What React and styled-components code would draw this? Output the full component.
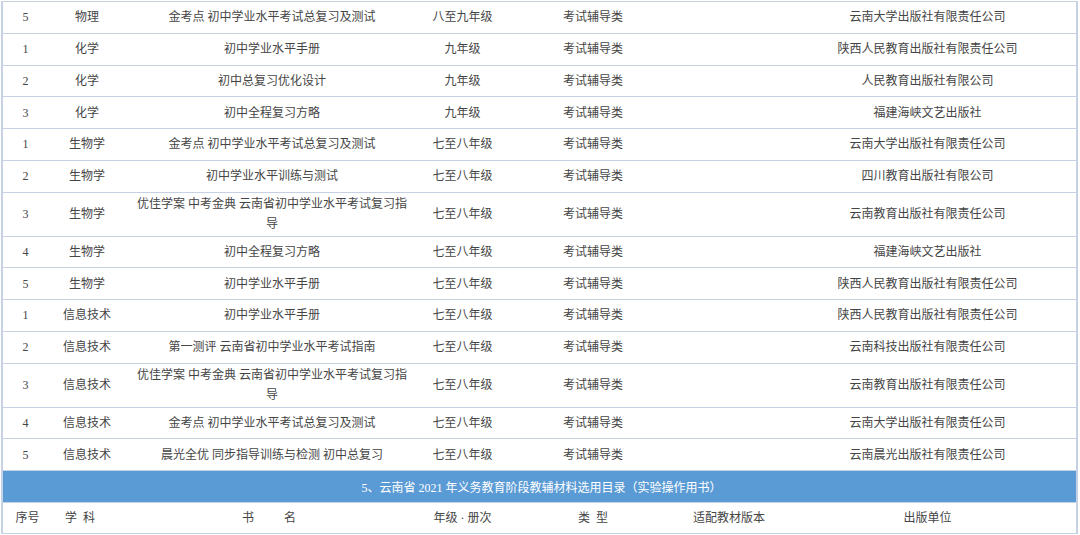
import React from "react";
import styled, { createGlobalStyle } from "styled-components";

const GlobalStyle = createGlobalStyle`
  html, body {
    margin: 0;
    padding: 0;
    background: #ffffff;
  }
  body {
    font-family: "Liberation Serif", "Noto Sans CJK SC", serif;
    color: #454545;
  }
`;

const Table = styled.div`
  width: 1073px;
  margin: 1px 0 0 1px;
  border-left: 2px solid #c6d2e3;
  border-right: 2px solid #c6d2e3;
  border-top: 1.5px solid #c6d2e3;
`;

const cols = "45px 78px 292px 89px 172px 100px 1fr";

const Row = styled.div`
  display: grid;
  grid-template-columns: ${cols};
  height: ${(p) => (p.$tall ? "44px" : "31.75px")};
  box-sizing: border-box;
  border-bottom: 1.5px solid #c6d2e3;
  font-size: 12px;
`;

const Cell = styled.div`
  display: flex;
  align-items: center;
  justify-content: center;
  text-align: center;
  line-height: 20px;
  padding: 0 ${(p) => p.$pad || 0}px;
  white-space: ${(p) => (p.$wrap ? "normal" : "pre")};
`;

const HeadCell = styled(Cell)`
  transform: translateX(${(p) => p.$shift || 0}px);
`;

const Banner = styled.div`
  height: 32px;
  box-sizing: border-box;
  background: #5b9bd5;
  color: #ffffff;
  font-size: 12px;
  display: flex;
  align-items: center;
  justify-content: center;
  border-bottom: 1.5px solid #c6d2e3;
  padding-left: 4px;
`;

const HeadRow = styled(Row)`
  height: 31px;
`;

const rows = [
  ["5", "物理", "金考点 初中学业水平考试总复习及测试", "八至九年级", "云南大学出版社有限责任公司"],
  ["1", "化学", "初中学业水平手册", "九年级", "陕西人民教育出版社有限责任公司"],
  ["2", "化学", "初中总复习优化设计", "九年级", "人民教育出版社有限公司"],
  ["3", "化学", "初中全程复习方略", "九年级", "福建海峡文艺出版社"],
  ["1", "生物学", "金考点 初中学业水平考试总复习及测试", "七至八年级", "云南大学出版社有限责任公司"],
  ["2", "生物学", "初中学业水平训练与测试", "七至八年级", "四川教育出版社有限公司"],
  ["3", "生物学", "优佳学案 中考金典 云南省初中学业水平考试复习指导", "七至八年级", "云南教育出版社有限责任公司", true],
  ["4", "生物学", "初中全程复习方略", "七至八年级", "福建海峡文艺出版社"],
  ["5", "生物学", "初中学业水平手册", "七至八年级", "陕西人民教育出版社有限责任公司"],
  ["1", "信息技术", "初中学业水平手册", "七至八年级", "陕西人民教育出版社有限责任公司"],
  ["2", "信息技术", "第一测评 云南省初中学业水平考试指南", "七至八年级", "云南科技出版社有限责任公司"],
  ["3", "信息技术", "优佳学案 中考金典 云南省初中学业水平考试复习指导", "七至八年级", "云南教育出版社有限责任公司", true],
  ["4", "信息技术", "金考点 初中学业水平考试总复习及测试", "七至八年级", "云南大学出版社有限责任公司"],
  ["5", "信息技术", "晨光全优 同步指导训练与检测 初中总复习", "七至八年级", "云南晨光出版社有限责任公司"],
];

const App = () => {
  return (
    <>
      <GlobalStyle />
      <Table>
        {rows.map(([no, subject, book, grade, publisher, tall], i) => (
          <Row key={i} $tall={tall}>
            <Cell>{no}</Cell>
            <Cell>{subject}</Cell>
            <Cell $wrap $pad={8}>{book}</Cell>
            <Cell>{grade}</Cell>
            <Cell>考试辅导类</Cell>
            <Cell></Cell>
            <Cell>{publisher}</Cell>
          </Row>
        ))}
        <Banner>5、云南省 2021 年义务教育阶段教辅材料选用目录（实验操作用书）</Banner>
        <HeadRow>
          <HeadCell $shift={2}>序号</HeadCell>
          <HeadCell $shift={-7}>{"学  科"}</HeadCell>
          <HeadCell $shift={-3}>{"书\u2003\u2003  名"}</HeadCell>
          <HeadCell>{"年级 · 册次"}</HeadCell>
          <HeadCell>{"类  型"}</HeadCell>
          <HeadCell>适配教材版本</HeadCell>
          <HeadCell>出版单位</HeadCell>
        </HeadRow>
      </Table>
    </>
  );
};

export default App;
